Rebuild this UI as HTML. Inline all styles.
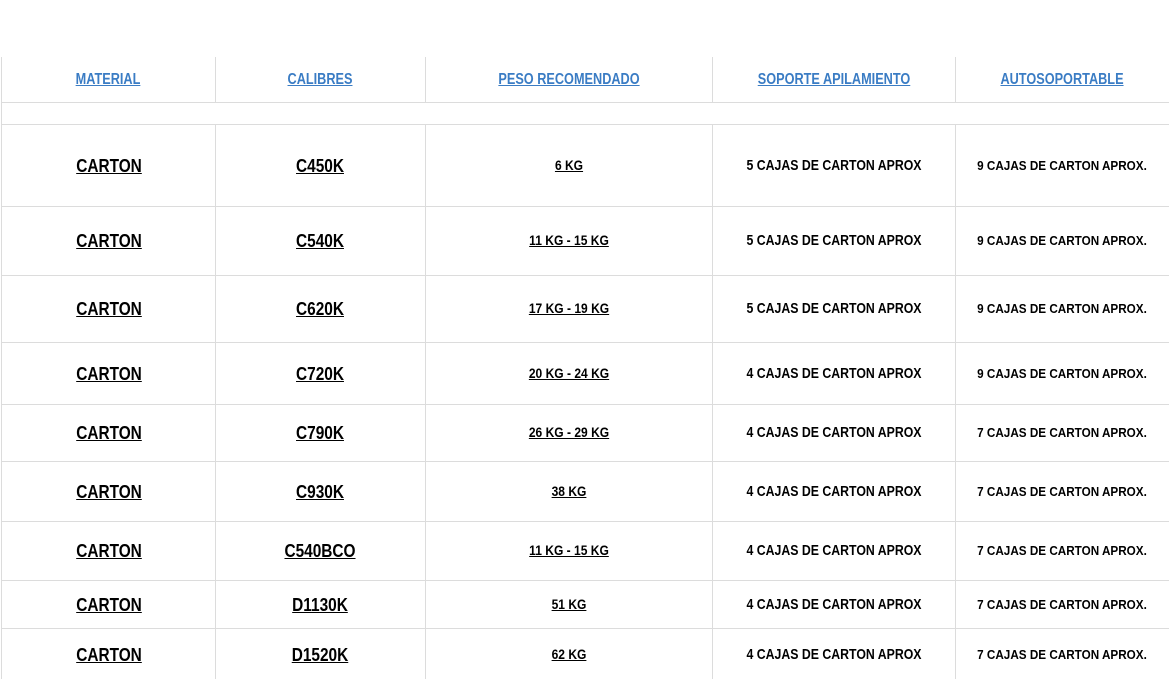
<!DOCTYPE html>
<html><head><meta charset="utf-8"><style>
body{margin:0;width:1169px;height:679px;background:#fff;position:relative;overflow:hidden;font-family:"Liberation Sans",Arial,sans-serif;font-weight:bold}
.h{position:absolute;height:1px;background:#dcdcdc;left:2px;right:0}
.v{position:absolute;width:1px;background:#dcdcdc}
.c{position:absolute;transform:translate(-50%,-50%);white-space:nowrap}
.c span{display:inline-block;text-decoration:underline}
.hd span{color:#3a7cc4;font-size:15.5px;transform:scaleX(.82)}
.a span{font-size:18.8px;transform:scaleX(.82);color:#000}
.p span{font-size:14px;transform:scaleX(.86);color:#000}
.s span{font-size:15px;transform:scaleX(.82);text-decoration:none;color:#000}
.t span{font-size:13px;transform:scaleX(.9);text-decoration:none;color:#000}
</style></head><body>
<div class="v" style="left:1px;top:57px;height:622px"></div>
<div class="v" style="left:215px;top:57px;height:45px"></div>
<div class="v" style="left:425px;top:57px;height:45px"></div>
<div class="v" style="left:712px;top:57px;height:45px"></div>
<div class="v" style="left:955px;top:57px;height:45px"></div>
<div class="v" style="left:215px;top:124px;height:555px"></div>
<div class="v" style="left:425px;top:124px;height:555px"></div>
<div class="v" style="left:712px;top:124px;height:555px"></div>
<div class="v" style="left:955px;top:124px;height:555px"></div>
<div class="h" style="top:102px"></div>
<div class="h" style="top:124px"></div>
<div class="h" style="top:206px"></div>
<div class="h" style="top:275px"></div>
<div class="h" style="top:342px"></div>
<div class="h" style="top:404px"></div>
<div class="h" style="top:461px"></div>
<div class="h" style="top:521px"></div>
<div class="h" style="top:580px"></div>
<div class="h" style="top:628px"></div>

<div class="c hd" style="left:108px;top:80px"><span>MATERIAL</span></div>
<div class="c hd" style="left:320px;top:80px"><span>CALIBRES</span></div>
<div class="c hd" style="left:569px;top:80px"><span>PESO RECOMENDADO</span></div>
<div class="c hd" style="left:834px;top:80px"><span>SOPORTE APILAMIENTO</span></div>
<div class="c hd" style="left:1062px;top:80px"><span>AUTOSOPORTABLE</span></div>

<div class="c a" style="left:109px;top:166px"><span>CARTON</span></div>
<div class="c a" style="left:320px;top:166px"><span>C450K</span></div>
<div class="c p" style="left:569px;top:166px"><span>6 KG</span></div>
<div class="c s" style="left:834px;top:166px"><span>5 CAJAS DE CARTON APROX</span></div>
<div class="c t" style="left:1062px;top:166px"><span>9 CAJAS DE CARTON APROX.</span></div>

<div class="c a" style="left:109px;top:241px"><span>CARTON</span></div>
<div class="c a" style="left:320px;top:241px"><span>C540K</span></div>
<div class="c p" style="left:569px;top:241px"><span>11 KG - 15 KG</span></div>
<div class="c s" style="left:834px;top:241px"><span>5 CAJAS DE CARTON APROX</span></div>
<div class="c t" style="left:1062px;top:241px"><span>9 CAJAS DE CARTON APROX.</span></div>

<div class="c a" style="left:109px;top:309px"><span>CARTON</span></div>
<div class="c a" style="left:320px;top:309px"><span>C620K</span></div>
<div class="c p" style="left:569px;top:309px"><span>17 KG - 19 KG</span></div>
<div class="c s" style="left:834px;top:309px"><span>5 CAJAS DE CARTON APROX</span></div>
<div class="c t" style="left:1062px;top:309px"><span>9 CAJAS DE CARTON APROX.</span></div>

<div class="c a" style="left:109px;top:374px"><span>CARTON</span></div>
<div class="c a" style="left:320px;top:374px"><span>C720K</span></div>
<div class="c p" style="left:569px;top:374px"><span>20 KG - 24 KG</span></div>
<div class="c s" style="left:834px;top:374px"><span>4 CAJAS DE CARTON APROX</span></div>
<div class="c t" style="left:1062px;top:374px"><span>9 CAJAS DE CARTON APROX.</span></div>

<div class="c a" style="left:109px;top:433px"><span>CARTON</span></div>
<div class="c a" style="left:320px;top:433px"><span>C790K</span></div>
<div class="c p" style="left:569px;top:433px"><span>26 KG - 29 KG</span></div>
<div class="c s" style="left:834px;top:433px"><span>4 CAJAS DE CARTON APROX</span></div>
<div class="c t" style="left:1062px;top:433px"><span>7 CAJAS DE CARTON APROX.</span></div>

<div class="c a" style="left:109px;top:492px"><span>CARTON</span></div>
<div class="c a" style="left:320px;top:492px"><span>C930K</span></div>
<div class="c p" style="left:569px;top:492px"><span>38 KG</span></div>
<div class="c s" style="left:834px;top:492px"><span>4 CAJAS DE CARTON APROX</span></div>
<div class="c t" style="left:1062px;top:492px"><span>7 CAJAS DE CARTON APROX.</span></div>

<div class="c a" style="left:109px;top:551px"><span>CARTON</span></div>
<div class="c a" style="left:320px;top:551px"><span>C540BCO</span></div>
<div class="c p" style="left:569px;top:551px"><span>11 KG - 15 KG</span></div>
<div class="c s" style="left:834px;top:551px"><span>4 CAJAS DE CARTON APROX</span></div>
<div class="c t" style="left:1062px;top:551px"><span>7 CAJAS DE CARTON APROX.</span></div>

<div class="c a" style="left:109px;top:605px"><span>CARTON</span></div>
<div class="c a" style="left:320px;top:605px"><span>D1130K</span></div>
<div class="c p" style="left:569px;top:605px"><span>51 KG</span></div>
<div class="c s" style="left:834px;top:605px"><span>4 CAJAS DE CARTON APROX</span></div>
<div class="c t" style="left:1062px;top:605px"><span>7 CAJAS DE CARTON APROX.</span></div>

<div class="c a" style="left:109px;top:655px"><span>CARTON</span></div>
<div class="c a" style="left:320px;top:655px"><span>D1520K</span></div>
<div class="c p" style="left:569px;top:655px"><span>62 KG</span></div>
<div class="c s" style="left:834px;top:655px"><span>4 CAJAS DE CARTON APROX</span></div>
<div class="c t" style="left:1062px;top:655px"><span>7 CAJAS DE CARTON APROX.</span></div>
</body></html>
